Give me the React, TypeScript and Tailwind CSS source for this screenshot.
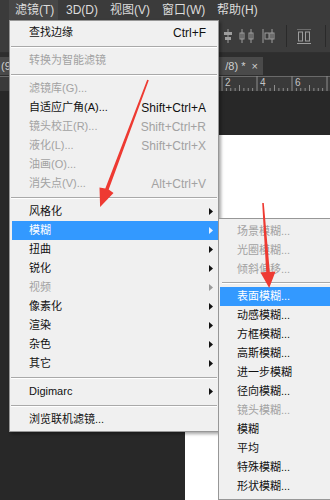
import React from 'react';

type Row =
  | { sep: true }
  | { label: string; shortcut?: string; disabled?: boolean; sub?: boolean; active?: boolean; sep?: false };

const MAIN: Row[] = [
  { label: '查找边缘', shortcut: 'Ctrl+F' },
  { sep: true },
  { label: '转换为智能滤镜', disabled: true },
  { sep: true },
  { label: '滤镜库(G)...', disabled: true },
  { label: '自适应广角(A)...', shortcut: 'Shift+Ctrl+A' },
  { label: '镜头校正(R)...', shortcut: 'Shift+Ctrl+R', disabled: true },
  { label: '液化(L)...', shortcut: 'Shift+Ctrl+X', disabled: true },
  { label: '油画(O)...', disabled: true },
  { label: '消失点(V)...', shortcut: 'Alt+Ctrl+V', disabled: true },
  { sep: true },
  { label: '风格化', sub: true },
  { label: '模糊', sub: true, active: true },
  { label: '扭曲', sub: true },
  { label: '锐化', sub: true },
  { label: '视频', sub: true, disabled: true },
  { label: '像素化', sub: true },
  { label: '渲染', sub: true },
  { label: '杂色', sub: true },
  { label: '其它', sub: true },
  { sep: true },
  { label: 'Digimarc', sub: true },
  { sep: true },
  { label: '浏览联机滤镜...' },
];

const BLUR: Row[] = [
  { label: '场景模糊...', disabled: true },
  { label: '光圈模糊...', disabled: true },
  { label: '倾斜偏移...', disabled: true },
  { sep: true },
  { label: '表面模糊...', active: true },
  { label: '动感模糊...' },
  { label: '方框模糊...' },
  { label: '高斯模糊...' },
  { label: '进一步模糊' },
  { label: '径向模糊...' },
  { label: '镜头模糊...', disabled: true },
  { label: '模糊' },
  { label: '平均' },
  { label: '特殊模糊...' },
  { label: '形状模糊...' },
];

function Triangle({ color }: { color: string }) {
  return (
    <svg width="4" height="7" viewBox="0 0 4 7" className="shrink-0">
      <path d="M0 0 L4 3.5 L0 7 Z" fill={color} />
    </svg>
  );
}

function MenuRow({ row, sub }: { row: Row; sub?: boolean }) {
  if (row.sep) {
    return (
      <div className={`flex flex-col justify-center ${sub ? 'h-[8px] mx-[3px]' : 'h-[9px] mx-[1px]'}`}>
        <div className="h-px bg-[#a9a9a9]" />
        <div className="h-px bg-white" />
      </div>
    );
  }
  const tone = row.active ? 'bg-[#3399ff] text-white' : row.disabled ? 'text-[#a2a2a2]' : 'text-[#101010]';
  const arrow = row.active ? '#e8f2ff' : row.disabled ? '#9a9a9a' : '#111111';
  return (
    <div className={`h-[19px] flex items-center pl-[17px] pr-[5px] ${sub ? 'ml-[1px] mr-[3px]' : 'ml-[2px]'} ${tone}`}>
      <span className="flex-1 text-[11px] leading-none whitespace-nowrap">{row.label}</span>
      {row.shortcut && <span className="text-[12px] leading-none mr-[7px]">{row.shortcut}</span>}
      {row.sub && <Triangle color={arrow} />}
    </div>
  );
}

function AlignIcon({ kind }: { kind: number }) {
  const c = '#9d9d9d';
  if (kind === 0)
    return (
      <svg width="12" height="14" viewBox="0 0 12 14">
        <path d="M6 0v14" stroke={c} />
        <rect x="2" y="3" width="8" height="3" fill={c} />
        <rect x="3" y="8" width="6" height="3" fill={c} />
      </svg>
    );
  if (kind === 1)
    return (
      <svg width="16" height="14" viewBox="0 0 16 14">
        <path d="M3 0v14M12 0v14" stroke={c} />
        <rect x="1" y="4" width="4" height="6" fill="none" stroke={c} />
        <rect x="10" y="4" width="4" height="6" fill="none" stroke={c} />
      </svg>
    );
  if (kind === 2)
    return (
      <svg width="14" height="14" viewBox="0 0 14 14">
        <path d="M2 0v14M11 0v14" stroke={c} />
        <rect x="4" y="4" width="4" height="6" fill="none" stroke={c} />
        <rect x="9" y="4" width="4" height="6" fill="none" stroke={c} />
      </svg>
    );
  return (
    <svg width="16" height="15" viewBox="0 0 16 15">
      <path d="M1 0h14M1 14.5h14" stroke={c} />
      <rect x="2.5" y="3" width="4" height="9" fill="none" stroke={c} />
      <rect x="9.5" y="3" width="4" height="9" fill="none" stroke={c} />
    </svg>
  );
}

function Ruler() {
  const ticks = [];
  for (let i = 0; i < 80; i++) {
    const x = 222 - 35 * 6 + i * 4.375;
    const major = i % 8 === 0;
    const mid = i % 4 === 0;
    const len = major ? 15 : mid ? 6 : 3;
    ticks.push(<line key={i} x1={x} x2={x} y1={15 - len} y2={15} stroke="#8d8d8d" strokeWidth="1" />);
  }
  return (
    <svg width="330" height="15" viewBox="0 0 330 15" className="block">
      <line x1="0" x2="330" y1="0.5" y2="0.5" stroke="#6a6a6a" />
      {ticks}
      <text x="225" y="10" fontSize="10" fill="#c4c4c4" fontFamily="Liberation Sans, sans-serif">2</text>
      <text x="260" y="10" fontSize="10" fill="#c4c4c4" fontFamily="Liberation Sans, sans-serif">4</text>
      <text x="295" y="10" fontSize="10" fill="#c4c4c4" fontFamily="Liberation Sans, sans-serif">6</text>
    </svg>
  );
}

export default function App() {
  const menubar = [
    { label: '滤镜(T)', w: 'w-[49px] pl-[6px]', on: true },
    { label: '3D(D)', w: 'w-[44px] pl-[8px]' },
    { label: '视图(V)', w: 'w-[52px] pl-[8px]' },
    { label: '窗口(W)', w: 'w-[55px] pl-[8px]' },
    { label: '帮助(H)', w: 'w-[60px] pl-[8px]' },
  ];
  return (
    <div className="relative w-[330px] h-[500px] overflow-hidden bg-[#282828] flex flex-col font-['Liberation_Sans','Noto_Sans_CJK_SC',sans-serif]">
      {/* menu bar */}
      <div className="h-[20px] bg-[#3b3b3b] flex pl-[9px] text-[12px] text-[#dcdcdc]">
        {menubar.map((m) => (
          <div key={m.label} className={`${m.w} h-full flex items-center ${m.on ? 'bg-[#474747]' : ''}`}>
            {m.label}
          </div>
        ))}
      </div>

      {/* options bar */}
      <div className="h-[33px] bg-[#3c3c3c] flex items-center pl-[222px] border-b border-[#303030]">
        <AlignIcon kind={0} />
        <div className="ml-[5px]"><AlignIcon kind={1} /></div>
        <div className="ml-[6px]"><AlignIcon kind={2} /></div>
        <div className="ml-[11px] w-px h-[22px] bg-[#2a2a2a]" />
        <div className="ml-[9px]"><AlignIcon kind={3} /></div>
        <div className="ml-[13px] w-px h-[22px] bg-[#2a2a2a]" />
      </div>

      {/* document tabs */}
      <div className="h-[23px] bg-[#2e2e2e] pt-[4px]">
        <div className="w-[263px] h-[18px] bg-[#4a4a4a] flex items-center justify-between pl-[1px] pr-[5px] text-[11px] text-[#cfcfcf]">
          <span>(9</span>
          <span>/8) *&nbsp;&nbsp;×</span>
        </div>
      </div>

      {/* ruler */}
      <div className="h-[15px] bg-[#3a3a3a]">
        <Ruler />
      </div>

      {/* workspace + canvas */}
      <div className="flex-1 pt-[44px] pl-[185px] flex flex-col">
        <div className="flex-1 bg-white" />
      </div>

      {/* filter menu */}
      <div className="absolute left-[9px] top-[20px] w-[210px] bg-[#f0f0f0] border border-[#979797] pt-[2px] pb-[2px] shadow-[2px_2px_3px_rgba(0,0,0,0.35)]">
        {MAIN.map((r, i) => (
          <MenuRow key={i} row={r} />
        ))}
      </div>

      {/* blur submenu */}
      <div className="absolute left-[218px] top-[218px] w-[116px] bg-[#f0f0f0] border border-[#979797] pt-[3px] pb-[3px]">
        {BLUR.map((r, i) => (
          <MenuRow key={i} row={r} sub />
        ))}
      </div>

      {/* annotation arrows */}
      <svg className="absolute inset-0 pointer-events-none" width="330" height="500" viewBox="0 0 330 500">
        <polygon
          points="148.8,80.3 147.2,79.7 105.3,188.4 99.5,187.5 100.1,207.1 113.5,193 108.7,189.6"
          fill="#ee3a32"
        />
        <polygon
          points="263.8,203 262.2,203 266.2,272 260.5,272.5 269.2,288 275.5,271.5 269.8,272"
          fill="#ee3a32"
        />
      </svg>
    </div>
  );
}
